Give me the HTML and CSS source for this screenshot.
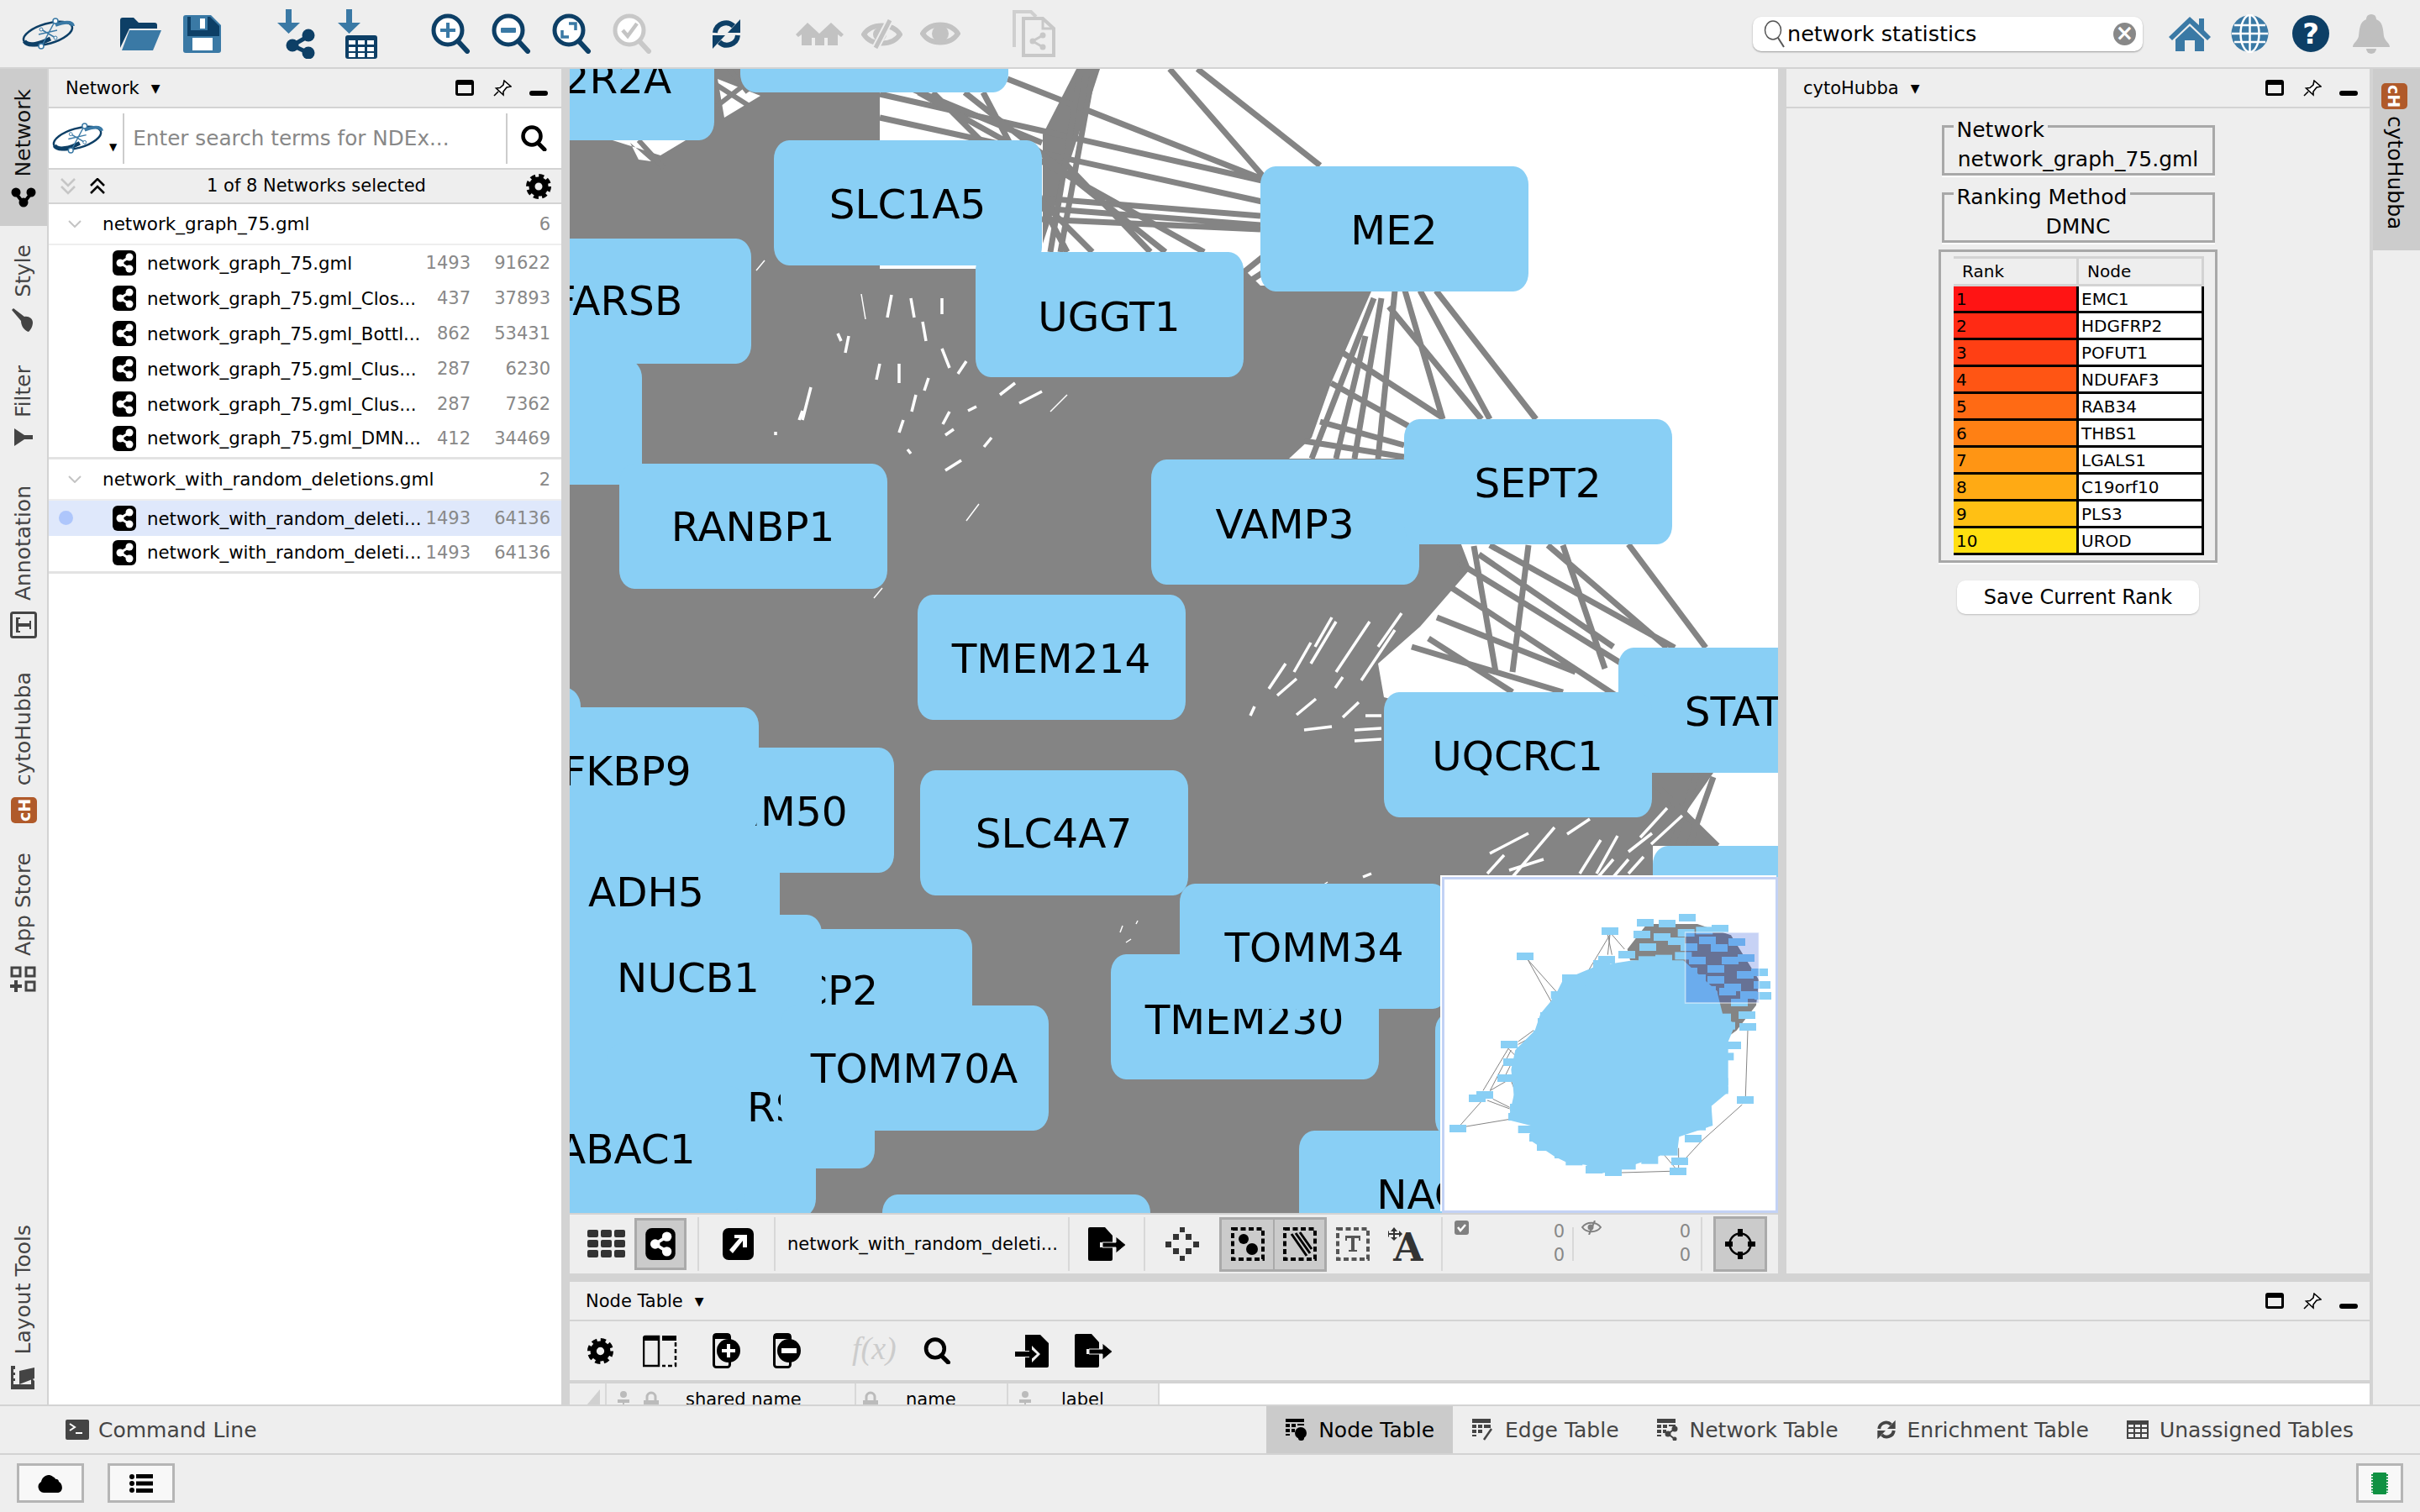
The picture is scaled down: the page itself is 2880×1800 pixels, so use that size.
FILE: index.html
```html
<!DOCTYPE html>
<html lang="en">
<head>
    <meta charset="UTF-8">
    <title>Cytoscape</title>
    <link rel="stylesheet" href="styles.css">
</head>
<body>
<svg class="defs" width="0" height="0">
    <symbol id="i-logo" viewBox="0 0 66 38">
        <ellipse cx="33" cy="19" rx="30" ry="12" transform="rotate(-16 33 19)" fill="none" stroke="#0d3f66" stroke-width="2.5"/>
        <path d="M5 28C10 35 24 31 36 25" fill="none" stroke="#0d3f66" stroke-width="5"/>
        <path d="M42 9C52 5 62 4 63 10" fill="none" stroke="#3a79a5" stroke-width="4"/>
        <path d="M42 3L25 35M25 14L42 24M22 20L44 15" fill="none" stroke="#3a79a5" stroke-width="1.5"/>
        <circle cx="42" cy="4" r="3" fill="#fff" stroke="#3a79a5" stroke-width="1.5"/>
        <circle cx="25" cy="34" r="3" fill="#fff" stroke="#3a79a5" stroke-width="1.5"/>
        <circle cx="25" cy="14" r="2" fill="#fff" stroke="#3a79a5"/>
        <circle cx="42" cy="24" r="2" fill="#fff" stroke="#3a79a5"/>
    </symbol>
    <symbol id="i-share" viewBox="0 0 28 30">
        <rect width="28" height="30" rx="6" fill="#000"/>
        <path d="M20 8L9 15L20 22" fill="none" stroke="#fff" stroke-width="3"/>
        <circle cx="20" cy="8" r="4.5" fill="#fff"/>
        <circle cx="9" cy="15" r="4.5" fill="#fff"/>
        <circle cx="20" cy="22" r="4.5" fill="#fff"/>
    </symbol>
    <symbol id="i-window" viewBox="0 0 22 19">
        <rect x="1.5" y="1.5" width="19" height="16" rx="1.5" fill="none" stroke="#000" stroke-width="3"/>
        <rect x="1" y="1" width="20" height="5" fill="#000"/>
    </symbol>
    <symbol id="i-pin" viewBox="0 0 22 20">
        <path d="M13 1L21 8L16 9L12 14L12 18L3.5 10L8 9.5L12 6Z" fill="#fff" stroke="#000" stroke-width="1.6"/>
        <path d="M6 14L1 19" stroke="#000" stroke-width="1.6"/>
    </symbol>
    <symbol id="i-gear" viewBox="0 0 30 30">
        <circle cx="15" cy="15" r="8" fill="none" stroke="#000" stroke-width="7"/>
        <circle cx="15" cy="15" r="12.5" fill="none" stroke="#000" stroke-width="5" stroke-dasharray="5.8 4"/>
    </symbol>
    <symbol id="i-search" viewBox="0 0 31 31">
        <circle cx="13" cy="13" r="10.5" fill="none" stroke="#000" stroke-width="4.5"/>
        <path d="M20 21L28 29" stroke="#000" stroke-width="5" stroke-linecap="round"/>
    </symbol>
    <symbol id="i-lens" viewBox="0 0 47 48">
        <circle cx="20" cy="20" r="17" fill="#fff" stroke="currentColor" stroke-width="5"/>
        <path d="M32 33L43 45" stroke="currentColor" stroke-width="6" stroke-linecap="round"/>
    </symbol>
    <symbol id="i-export" viewBox="0 0 45 40">
        <path d="M2 0H20L29 10V18H14V24H29V38A2 2 0 0 1 27 40H2A2 2 0 0 1 0 38V2A2 2 0 0 1 2 0Z" fill="#000"/>
        <path d="M17 18H33V11L45 21L33 31V24H17Z" fill="#000" stroke="#eee"/>
    </symbol>
    <symbol id="i-dotted" viewBox="0 0 40 40">
        <rect x="2" y="2" width="36" height="36" fill="none" stroke="#000" stroke-width="4" stroke-dasharray="6 3.5"/>
    </symbol>
    <symbol id="i-person" viewBox="0 0 20 26">
        <circle cx="10" cy="4" r="4" fill="#bbb"/>
        <path d="M3 10H17V14H11V18H18V26H14V21H6V26H2V18H9V14H3Z" fill="#bbb"/>
    </symbol>
    <symbol id="i-lock" viewBox="0 0 18 26">
        <path d="M4 12V7A5 5 0 0 1 14 7V12" fill="none" stroke="#bbb" stroke-width="3"/>
        <rect y="11" width="18" height="15" fill="#bbb"/>
    </symbol>
</svg>

<div class="app">
    <header class="toolbar">
        <svg class="tb-logo" width="66" height="38"><use href="#i-logo"/></svg>
        <div class="tool-group tb-file">
            <svg width="49" height="39" viewBox="0 0 49 39">
                <path d="M0 3A3 3 0 0 1 3 0H16L22 6H41A3 3 0 0 1 44 9V13H11L0 36Z" fill="#0d3f66"/>
                <path d="M11 15H49L39 39H2Z" fill="#3a79a5"/>
            </svg>
            <svg width="45" height="45" viewBox="0 0 45 45">
                <path d="M3 0H33L45 12V42A3 3 0 0 1 42 45H3A3 3 0 0 1 0 42V3A3 3 0 0 1 3 0Z" fill="#3a79a5"/>
                <path d="M5 2H32L43 13V25H5Z" fill="#0d3f66"/>
                <rect x="9" y="2" width="20" height="16" fill="#3a79a5"/>
                <rect x="20" y="4" width="6" height="12" fill="#fff"/>
                <rect x="11" y="27" width="24" height="15" fill="#fff"/>
            </svg>
        </div>
        <div class="tool-group tb-import">
            <svg width="46" height="59" viewBox="0 0 46 59">
                <path d="M10 0H17V16H27L13.5 29L0 16H10Z" fill="#3a79a5"/>
                <path d="M37 32L18 43L37 52" fill="none" stroke="#0d3f66" stroke-width="5"/>
                <circle cx="37" cy="31" r="7.5" fill="#0d3f66"/>
                <circle cx="18" cy="43" r="7.5" fill="#0d3f66"/>
                <circle cx="37" cy="52" r="7.5" fill="#0d3f66"/>
            </svg>
            <svg width="47" height="59" viewBox="0 0 47 59">
                <path d="M10 0H17V16H27L13.5 29L0 16H10Z" fill="#3a79a5"/>
                <rect x="9" y="31" width="38" height="28" rx="3" fill="#0d3f66"/>
                <path d="M13 37h8v5h-8zM24 37h8v5h-8zM35 37h8v5h-8zM13 45h8v5h-8zM24 45h8v5h-8zM35 45h8v5h-8zM13 52h8v5h-8zM24 52h8v5h-8zM35 52h8v5h-8z" fill="#fff"/>
            </svg>
        </div>
        <div class="tool-group tb-zoom">
            <svg class="lens" width="47" height="48" viewBox="0 0 47 48">
                <use href="#i-lens"/>
                <path d="M18 11H22V18H29V22H22V29H18V22H11V18H18Z" fill="#3a79a5"/>
            </svg>
            <svg class="lens" width="47" height="48" viewBox="0 0 47 48">
                <use href="#i-lens"/>
                <rect x="11" y="17" width="18" height="6" rx="1" fill="#3a79a5"/>
            </svg>
            <svg class="lens" width="47" height="48" viewBox="0 0 47 48">
                <use href="#i-lens"/>
                <path d="M20 12H28V20M12 20V28H20" fill="none" stroke="#3a79a5" stroke-width="3.5"/>
            </svg>
            <svg class="lens lens-off" width="47" height="48" viewBox="0 0 47 48">
                <use href="#i-lens"/>
                <path d="M12 20L18 27L29 12" fill="none" stroke="#c4c4c4" stroke-width="4.5"/>
            </svg>
        </div>
        <svg class="tb-refresh" width="37" height="35" viewBox="0 0 37 35">
            <path d="M5 16A13 13 0 0 1 27 8" fill="none" stroke="#0d3f66" stroke-width="6"/>
            <path d="M35 0V16H20Z" fill="#0d3f66"/>
            <path d="M32 19A13 13 0 0 1 10 27" fill="none" stroke="#0d3f66" stroke-width="6"/>
            <path d="M2 35V19H17Z" fill="#0d3f66"/>
        </svg>
        <div class="tool-group tb-view">
            <svg width="57" height="27" viewBox="0 0 57 27">
                <path d="M14 0L28 13L42 0L57 14L54 17L50 14V27H38V18H34V27H23V18H19V27H7V14L3 17L0 14Z" fill="#c2c2c2"/>
            </svg>
            <svg width="49" height="35" viewBox="0 0 49 35">
                <path d="M3 18C12 4 37 4 46 18C37 32 12 32 3 18Z" fill="none" stroke="#c2c2c2" stroke-width="6"/>
                <circle cx="22" cy="18" r="8" fill="#c2c2c2"/>
                <path d="M34 1L17 34" stroke="#eee" stroke-width="9"/>
                <path d="M34 1L17 34" stroke="#c2c2c2" stroke-width="5"/>
            </svg>
            <svg width="48" height="30" viewBox="0 0 48 30">
                <path d="M3 15C12 1 36 1 45 15C36 29 12 29 3 15Z" fill="none" stroke="#c2c2c2" stroke-width="6"/>
                <circle cx="24" cy="15" r="10" fill="#c2c2c2"/>
            </svg>
        </div>
        <svg class="tb-doc" width="51" height="56" viewBox="0 0 51 56">
            <path d="M2 44V2H22L28 8" fill="none" stroke="#cfcfcf" stroke-width="4"/>
            <path d="M13 10H36L49 22V54H13Z" fill="#eee" stroke="#c8c8c8" stroke-width="4"/>
            <path d="M36 10V22H49" fill="none" stroke="#c8c8c8" stroke-width="3"/>
            <path d="M36 30L24 37L36 44" fill="none" stroke="#c8c8c8" stroke-width="3"/>
            <circle cx="36" cy="30" r="3.5" fill="#c8c8c8"/><circle cx="24" cy="37" r="3.5" fill="#c8c8c8"/><circle cx="36" cy="44" r="3.5" fill="#c8c8c8"/>
        </svg>
        <div class="cmd-search">
            <svg width="26" height="34" viewBox="0 0 26 34">
                <ellipse cx="11" cy="13" rx="9.5" ry="11" fill="none" stroke="#555" stroke-width="1.5"/>
                <path d="M17 22L24 33" stroke="#555" stroke-width="2"/>
            </svg>
            <span class="cmd-text">network statistics</span>
            <span class="cmd-clear">×</span>
        </div>
        <div class="tool-group tb-right">
            <svg class="tb-home" width="50" height="41" viewBox="0 0 50 41">
                <path d="M25 0L36 10V2H42V16L50 24L46 28L25 8L4 28L0 24Z" fill="#3a79a5"/>
                <path d="M8 27L25 11L42 27V41H31V28H19V41H8Z" fill="#3a79a5"/>
            </svg>
            <svg width="45" height="46" viewBox="0 0 45 46">
                <circle cx="22.5" cy="23" r="22" fill="#3a79a5"/>
                <path d="M22.5 1V45M1 23H44M4 13H41M4 33H41" stroke="#fff" stroke-width="2.5" fill="none"/>
                <ellipse cx="22.5" cy="23" rx="11" ry="22" fill="none" stroke="#fff" stroke-width="2.5"/>
            </svg>
            <svg class="help" width="44" height="44" viewBox="0 0 44 44">
                <circle cx="22" cy="22" r="22" fill="#0d3f66"/>
                <text x="22" y="34" class="help-mark">?</text>
            </svg>
            <svg width="44" height="47" viewBox="0 0 44 47">
                <path d="M22 0C27 0 28 4 28 6C36 9 36 18 37 26C38 32 44 34 44 39H0C0 34 6 32 7 26C8 18 8 9 16 6C16 4 17 0 22 0Z" fill="#bfbfbf"/>
                <path d="M16 41A6 6 0 0 0 28 41Z" fill="#bfbfbf"/>
            </svg>
        </div>
    </header>

    <div class="main">
        <nav class="side-strip">
            <div class="side-tab active">
                <span class="tab-label">Network</span>
                <svg width="30" height="24" viewBox="0 0 30 24">
                    <path d="M5 6L15 19L25 6" fill="none" stroke="#000" stroke-width="4"/>
                    <circle cx="6" cy="6" r="5.5" fill="#000"/><circle cx="24" cy="6" r="5.5" fill="#000"/><circle cx="15" cy="18" r="5.5" fill="#000"/>
                </svg>
            </div>
            <div class="side-tab">
                <span class="tab-label">Style</span>
                <svg width="30" height="28" viewBox="0 0 30 28">
                    <path d="M1 2L3 0L16 10C21 9 26 12 26 17C26 22 23 26 21 28C17 27 12 22 12 15Z" fill="#444"/>
                </svg>
            </div>
            <div class="side-tab">
                <span class="tab-label">Filter</span>
                <svg width="22" height="22" viewBox="0 0 22 22">
                    <path d="M0 0L12 8H22V13H12L0 21Z" fill="#444"/>
                </svg>
            </div>
            <div class="side-tab tab-anno">
                <span class="tab-label">Annotation</span>
                <svg width="32" height="32" viewBox="0 0 32 32">
                    <rect x="1.5" y="1.5" width="29" height="29" rx="2" fill="none" stroke="#444" stroke-width="3"/>
                    <path d="M7 7H25V12H23V10H18V23H21V25H11V23H14V10H9V12H7Z" fill="#444" transform="rotate(-90 16 16)"/>
                </svg>
            </div>
            <div class="side-tab">
                <span class="tab-label">cytoHubba</span>
                <span class="ch-badge ch-left">cH</span>
            </div>
            <div class="side-tab tab-store">
                <span class="tab-label">App Store</span>
                <svg width="32" height="32" viewBox="0 0 32 32">
                    <g fill="none" stroke="#444" stroke-width="3">
                        <rect x="2" y="2" width="10" height="10"/><rect x="19" y="2" width="10" height="10"/><rect x="19" y="19" width="10" height="10"/>
                    </g>
                    <path d="M5 17H9V22H14V26H9V31H5V26H0V22H5Z" fill="#444"/>
                </svg>
            </div>
            <div class="side-tab bottom">
                <span class="tab-label">Layout Tools</span>
                <svg width="30" height="28" viewBox="0 0 30 28">
                    <path d="M0 0H5V4H3V8H5V11H3V15H5V18H3V22H24V16H26L28 18V28H0Z" fill="#444"/>
                    <path d="M10 6L28 2V15L10 22Z" fill="#444"/>
                </svg>
            </div>
        </nav>

        <section class="left-panel">
            <div class="panel-head">
                <span class="head-title">Network</span><span class="caret">▼</span>
                <svg class="head-win" width="22" height="19"><use href="#i-window"/></svg>
                <svg class="head-pin" width="22" height="20"><use href="#i-pin"/></svg>
                <span class="head-min"></span>
            </div>
            <div class="ndex-row">
                <svg class="ndex-logo" width="64" height="37"><use href="#i-logo"/></svg>
                <span class="small-caret">▼</span>
                <span class="ndex-input">Enter search terms for NDEx...</span>
                <svg class="ndex-go" width="31" height="31"><use href="#i-search"/></svg>
            </div>
            <div class="net-summary">
                <svg class="chev-down" width="20" height="20" viewBox="0 0 20 20">
                    <path d="M2 1L10 9L18 1M2 10L10 18L18 10" fill="none" stroke="#c6c6c6" stroke-width="2.5"/>
                </svg>
                <svg class="chev-up" width="20" height="20" viewBox="0 0 20 20">
                    <path d="M2 9L10 1L18 9M2 18L10 10L18 18" fill="none" stroke="#000" stroke-width="2.5"/>
                </svg>
                <span class="summary-text">1 of 8 Networks selected</span>
                <svg class="summary-gear" width="30" height="30"><use href="#i-gear"/></svg>
            </div>
            <div class="net-list">
                <div class="net-group">
                    <svg width="16" height="9" viewBox="0 0 16 9"><path d="M1 1L8 8L15 1" fill="none" stroke="#c4c4c4" stroke-width="2"/></svg>
                    <span class="group-name">network_graph_75.gml</span>
                    <span class="num">6</span>
                </div>
                <div class="net-row">
                    <svg width="28" height="30"><use href="#i-share"/></svg>
                    <span class="net-name">network_graph_75.gml</span><span class="num node-count">1493</span><span class="num edge-count">91622</span>
                </div>
                <div class="net-row">
                    <svg width="28" height="30"><use href="#i-share"/></svg>
                    <span class="net-name">network_graph_75.gml_Clos...</span><span class="num node-count">437</span><span class="num edge-count">37893</span>
                </div>
                <div class="net-row">
                    <svg width="28" height="30"><use href="#i-share"/></svg>
                    <span class="net-name">network_graph_75.gml_Bottl...</span><span class="num node-count">862</span><span class="num edge-count">53431</span>
                </div>
                <div class="net-row">
                    <svg width="28" height="30"><use href="#i-share"/></svg>
                    <span class="net-name">network_graph_75.gml_Clus...</span><span class="num node-count">287</span><span class="num edge-count">6230</span>
                </div>
                <div class="net-row">
                    <svg width="28" height="30"><use href="#i-share"/></svg>
                    <span class="net-name">network_graph_75.gml_Clus...</span><span class="num node-count">287</span><span class="num edge-count">7362</span>
                </div>
                <div class="net-row last">
                    <svg width="28" height="30"><use href="#i-share"/></svg>
                    <span class="net-name">network_graph_75.gml_DMN...</span><span class="num node-count">412</span><span class="num edge-count">34469</span>
                </div>
                <div class="net-group">
                    <svg width="16" height="9" viewBox="0 0 16 9"><path d="M1 1L8 8L15 1" fill="none" stroke="#c4c4c4" stroke-width="2"/></svg>
                    <span class="group-name">network_with_random_deletions.gml</span>
                    <span class="num">2</span>
                </div>
                <div class="net-row selected">
                    <span class="sel-dot"></span>
                    <svg width="28" height="30"><use href="#i-share"/></svg>
                    <span class="net-name">network_with_random_deleti...</span><span class="num node-count">1493</span><span class="num edge-count">64136</span>
                </div>
                <div class="net-row last">
                    <svg width="28" height="30"><use href="#i-share"/></svg>
                    <span class="net-name">network_with_random_deleti...</span><span class="num node-count">1493</span><span class="num edge-count">64136</span>
                </div>
            </div>
        </section>

        <div class="center">
            <div class="center-top">
                <div class="canvas-col">
                    <div class="canvas-wrap">
                        <svg class="graph" width="1438" height="1362" viewBox="678 82 1438 1362">
                            <!-- edges -->
                            <path class="mass" d="M678 82H1047V320H1480L1500 340H1635L1584 456L1561 521L1534 546H1700L1750 677L1690 746L1640 790L1647 830L1966 920H2039L2007 966L2045 1007H1967V1100H1717V1444H678Z"/>
                            <path class="mass" d="M1281 82H1309L1268 208L1241 290L1241 160Z"/>
                            <path class="mass" d="M851 82H1047V170H851Z"/>
                            <g class="edge-lines">
                                <path d="M1392 82L1506 213M1425 82L1571 197M1047 112L1502 215M1047 140L1502 240M1199 94L1502 213M1240 236L1500 257M1240 261L1500 273M1240 248L1500 268"/>
                                <path d="M1093 110L1433 300M1148 110L1387 300M1268 195L1369 300M1110 110L1300 300M1170 110L1270 300M1285 90L1250 300M1300 90L1262 300M1047 90L1240 170"/>
                                <path d="M1709 346L1828 499M1690 346L1773 499M1672 346L1717 499M1653 365L1763 499M1635 355L1561 546M1644 355L1612 546M1598 420L1718 498M1584 456L1676 507M1571 502L1671 530M1552 525L1671 544M1660 346L1640 546M1625 400L1590 546"/>
                                <path d="M1479 325L1510 300M1479 340L1510 320"/>
                                <path d="M1773 649L1993 771M1819 649L1800 800M1842 649L1984 771M1860 649L1910 796M1938 648L2030 771M1754 650L1780 800M1736 670L1930 790M1710 735L1875 800M1760 660L1920 770M1728 700L1926 830M1700 760L1800 824M1680 770L1860 824"/>
                                <path d="M1966 930L2044 1007M2020 920L1990 1007M2039 925L2010 1007"/>
                            </g>
                            <!-- gaps left in the bundle of edges -->
                            <g class="gaps">
                                <path d="M965 461L955 500M997 397L1001 406M1061 351L1056 378M1084 355L1088 378M1121 355L1121 374M1098 383L1102 406M1047 433L1043 452M1070 433L1070 456M1121 415L1130 438M1208 456L1190 470M1240 466L1213 480M1180 521L1171 532M1144 548L1125 560M1080 535L1084 540M1135 511L1125 518M1162 484L1152 489M923 514L923 518M955 489L951 500M1010 400L1006 420M1090 470L1085 490M1105 450L1100 465M1150 430L1140 445M1130 490L1122 505M1075 500L1070 515"/>
                                <path class="thin" d="M1320 340L1314 352M1025 350L1030 380M870 400L858 430M910 310L900 322M1270 470L1250 490M1165 600L1150 620M1050 700L1040 712M830 640L826 650M720 430L716 440"/>
                                <path d="M1543 808L1520 828M1598 806L1589 819M1493 841L1488 852M1566 832L1543 851M1617 836L1598 854M1644 867L1612 869M1644 880L1612 882M1644 852L1625 852M1585 865L1552 869"/>
                                <path d="M1560 790L1590 740M1590 800L1630 740M1620 810L1660 750M1640 770L1668 730M1565 770L1585 735M1540 800L1560 765M1510 820L1530 790"/>
                                <path d="M1819 992L1773 1016M1892 975L1865 993M1837 1023L1796 1036M1920 1023L1902 1044M1938 1023L1920 1044M1966 992L1938 1014M1984 962L1952 997M2002 971L1965 1005M1956 1020L1938 1040M1632 1040L1622 1044"/>
                                <path d="M1800 1044L1850 985M1770 1040L1790 1018M1880 1040L1905 1000M1900 1040L1925 995"/>
                                <path class="thin" d="M1426 1078L1422 1085M1354 1096L1352 1100M1336 1102L1333 1110M1346 1118L1340 1122M1580 1050L1565 1060"/>
                                <path class="wide" d="M854 94L905 114L862 140ZM729 167L786 185L816 167ZM750 170L775 192L760 190Z"/>
                            </g>
                            <path class="edge-cut" d="M851 128L905 86M868 82L890 110M851 100L890 125M760 167L790 200"/>
                            <!-- nodes, back to front -->
                            <rect class="node" x="881" y="-39"/>
                            <rect class="node" x="445" y="428"/>
                            <rect class="node" x="531" y="18"/><text class="label" x="691" y="94">PPP2R2A</text>
                            <rect class="node" x="575" y="284"/><text class="label" x="735" y="358">FARSB</text>
                            <rect class="node" x="737" y="552"/><text class="label" x="896" y="627">RANBP1</text>
                            <rect class="node" x="921" y="167"/><text class="label" x="1080" y="243">SLC1A5</text>
                            <rect class="node" x="1161" y="300"/><text class="label" x="1320" y="377">UGGT1</text>
                            <rect class="node" x="1500" y="198"/><text class="label" x="1659" y="274">ME2</text>
                            <rect class="node" x="1370" y="547"/><text class="label" x="1529" y="624">VAMP3</text>
                            <rect class="node" x="1671" y="499"/><text class="label" x="1830" y="575">SEPT2</text>
                            <rect class="node" x="1092" y="708"/><text class="label" x="1251" y="784">TMEM214</text>
                            <rect class="node" x="1926" y="771"/><text class="label" x="2078" y="847">STAT1</text>
                            <rect class="node" x="1647" y="824"/><text class="label" x="1806" y="900">UQCRC1</text>
                            <rect class="node" x="1967" y="1007"/>
                            <rect class="node" x="745" y="890"/><text class="label" x="914" y="966">TIMM50</text>
                            <rect class="node" x="372" y="819"/>
                            <rect class="node" x="584" y="842"/><text class="label" x="746" y="918">FKBP9</text>
                            <rect class="node" x="609" y="987"/><text class="label" x="769" y="1062">ADH5</text>
                            <rect class="node" x="600" y="1150"/>
                            <rect class="node" x="838" y="1106"/><text class="label" x="998" y="1179">CP2</text>
                            <rect class="node" x="659" y="1089"/><text class="label" x="819" y="1164">NUCB1</text>
                            <rect class="node" x="652" y="1300"/>
                            <rect class="node" x="722" y="1242"/><text class="label start" x="889" y="1318">RSL</text>
                            <rect class="node" x="568" y="1293"/><text class="label" x="727" y="1368">GABAC1</text>
                            <rect class="node" x="929" y="1197"/><text class="label" x="1088" y="1272">TOMM70A</text>
                            <rect class="node" x="1095" y="917"/><text class="label" x="1254" y="992">SLC4A7</text>
                            <rect class="node" x="1050" y="1422"/>
                            <rect class="node" x="1322" y="1136"/><text class="label" x="1481" y="1214">TMEM230</text>
                            <rect class="node" x="1404" y="1052"/><text class="label" x="1564" y="1128">TOMM34</text>
                            <rect class="node" x="1708" y="1205"/>
                            <rect class="node" x="1546" y="1346"/><text class="label" x="1706" y="1422">NACA</text>
                        </svg>
                        <div class="minimap">
                            <svg width="394" height="394" viewBox="177 81 1182 1182">
                                <path class="mini-mass" d="M900 240H1080L1200 280L1300 440L1290 530L1220 620L1165 660L1150 480L1030 380L840 370L830 330Z"/>
                                <path class="mini-mass" d="M610 450L650 450V500H610Z"/>
                                <g class="mini-edges">
                                    <path d="M475 368L575 480M475 368L560 520M768 278L680 425M768 278L760 350M775 278L820 330M760 278L775 350M1260 620L1252 855M1240 885L1095 1015M1040 1075L1095 1015M255 963L405 938M235 957L330 850M405 685L315 835M415 690L340 835M340 835L400 800M415 800L445 875M330 870L410 900M350 865L410 895M810 1128L981 1123M440 660L495 620M440 670L495 640M945 1045L1000 1110M1013 1040L1013 1110M425 720L385 800M400 680L440 720"/>
                                </g>
                                <path class="mini-blob" d="M600 440L720 390L850 370L1030 370L1150 480L1170 560L1215 600L1190 660L1190 840L1130 890L1135 960L1015 1000L1010 1040L940 1070L810 1115L740 1130L680 1100L610 1090L570 1070L480 1010L485 960L405 940L425 850L415 760L430 690L500 620L520 560L570 500Z"/>
                                <g class="mini-nodes">
                                    <rect x="435" y="342"/><rect x="738" y="252"/><rect x="864" y="222"/><rect x="942" y="225"/><rect x="1014" y="204"/><rect x="1131" y="243"/><rect x="1075" y="250"/><rect x="852" y="264"/><rect x="924" y="273"/><rect x="975" y="288"/><rect x="1010" y="258"/><rect x="873" y="309"/><rect x="798" y="336"/><rect x="726" y="354"/><rect x="708" y="369"/><rect x="597" y="420"/><rect x="557" y="480"/><rect x="555" y="525"/><rect x="519" y="555"/><rect x="510" y="576"/><rect x="378" y="657"/><rect x="387" y="720"/><rect x="366" y="777"/><rect x="291" y="837"/><rect x="264" y="849"/><rect x="195" y="957"/><rect x="411" y="882"/><rect x="405" y="915"/><rect x="507" y="1023"/><rect x="681" y="1104"/><rect x="750" y="1113"/><rect x="981" y="1110"/><rect x="987" y="1074"/><rect x="1035" y="993"/><rect x="1221" y="855"/><rect x="1227" y="552"/><rect x="1230" y="594"/><rect x="1176" y="660"/><rect x="1281" y="444"/><rect x="1284" y="483"/><rect x="1272" y="399"/>
                                    <rect x="1020" y="309"/><rect x="1086" y="285"/><rect x="1128" y="312"/><rect x="1191" y="291"/><rect x="1050" y="357"/><rect x="1167" y="357"/><rect x="1224" y="348"/><rect x="1116" y="387"/><rect x="1116" y="426"/><rect x="1221" y="408"/><rect x="1050" y="420"/><rect x="1020" y="396"/><rect x="1176" y="453"/><rect x="1158" y="468"/><rect x="1086" y="462"/><rect x="1086" y="480"/><rect x="1233" y="480"/><rect x="1200" y="507"/><rect x="1040" y="450"/>
                                    <rect x="560" y="495"/><rect x="620" y="460"/><rect x="680" y="420"/><rect x="740" y="400"/><rect x="800" y="380"/><rect x="870" y="355"/><rect x="930" y="350"/><rect x="1000" y="340"/><rect x="1140" y="560"/><rect x="1155" y="590"/><rect x="1130" y="620"/><rect x="1150" y="700"/><rect x="1125" y="750"/><rect x="1130" y="790"/><rect x="1130" y="820"/><rect x="1070" y="890"/><rect x="1070" y="920"/><rect x="1050" y="950"/><rect x="950" y="1010"/><rect x="950" y="1040"/><rect x="880" y="1070"/><rect x="800" y="1090"/><rect x="610" y="1075"/><rect x="570" y="1050"/><rect x="480" y="990"/><rect x="440" y="960"/><rect x="450" y="900"/><rect x="425" y="830"/><rect x="420" y="760"/><rect x="435" y="680"/><rect x="495" y="620"/>
                                </g>
                                <rect class="mini-view" x="1037" y="270" width="263" height="252"/>
                            </svg>
                        </div>
                    </div>
                    <div class="canvas-bar">
                        <svg width="46" height="34" viewBox="0 0 46 34">
                            <g fill="#333">
                                <rect width="13" height="9" rx="2"/><rect x="16" width="13" height="9" rx="2"/><rect x="32" width="13" height="9" rx="2"/>
                                <rect y="12" width="13" height="9" rx="2"/><rect x="16" y="12" width="13" height="9" rx="2"/><rect x="32" y="12" width="13" height="9" rx="2"/>
                                <rect y="24" width="13" height="9" rx="2"/><rect x="16" y="24" width="13" height="9" rx="2"/><rect x="32" y="24" width="13" height="9" rx="2"/>
                            </g>
                        </svg>
                        <span class="toggle cb-view"><svg width="38" height="38"><use href="#i-share"/></svg></span>
                        <span class="bar-sep cb-s1"></span>
                        <svg class="cb-arrow" width="37" height="38" viewBox="0 0 37 38">
                            <rect width="37" height="38" rx="7"/>
                            <path d="M14 8H29V23H24V15L12 30L8 26L20 12H14Z" fill="#fff"/>
                        </svg>
                        <span class="bar-sep cb-s2"></span>
                        <span class="cb-title">network_with_random_deleti...</span>
                        <span class="bar-sep cb-s3"></span>
                        <svg class="cb-export" width="45" height="40"><use href="#i-export"/></svg>
                        <span class="bar-sep cb-s4"></span>
                        <svg class="cb-diamond" width="40" height="40" viewBox="0 0 40 40">
                            <path d="M17 0h6v6h-6zM9 8h7v7H9zM24 8h7v7h-7zM0 17h7v7H0zM33 17h7v7h-7zM9 25h7v7H9zM24 25h7v7h-7zM17 34h6v6h-6z" fill="#333"/>
                        </svg>
                        <span class="toggle-pair">
                            <span class="pair-cell">
                                <svg width="40" height="40" viewBox="0 0 40 40">
                                    <use href="#i-dotted"/>
                                    <circle cx="15" cy="14" r="6" fill="#000"/><circle cx="25" cy="26" r="7" fill="#000"/>
                                </svg>
                            </span>
                            <span class="pair-cell">
                                <svg width="40" height="40" viewBox="0 0 40 40">
                                    <use href="#i-dotted"/>
                                    <path d="M10 8L28 34M15 7L32 31M20 6L34 26" stroke="#000" stroke-width="3"/>
                                </svg>
                            </span>
                        </span>
                        <svg class="cb-textbox" width="40" height="40" viewBox="0 0 40 40">
                            <rect x="2" y="2" width="36" height="36" fill="none" stroke="#555" stroke-width="4" stroke-dasharray="6 3.5"/>
                            <path d="M11 10H29V16H27V13H22V27H25V29H15V27H18V13H13V16H11Z" fill="#555"/>
                        </svg>
                        <svg class="cb-move" width="42" height="42" viewBox="0 0 42 42">
                            <path d="M7 1L11 6H8V8H13V5L17 9L13 13V10H8V13H11L7 17L3 13H6V10H1V13L-3 9L1 5V8H6V6H3Z" fill="#333"/>
                            <text class="move-a" x="24" y="41">A</text>
                        </svg>
                        <span class="bar-sep cb-s5"></span>
                        <div class="stats stats-sel">
                            <svg width="17" height="17" viewBox="0 0 17 17">
                                <rect width="17" height="17" rx="3" fill="#808080"/>
                                <path d="M4 8L7 12L13 5" fill="none" stroke="#fff" stroke-width="2.5"/>
                            </svg>
                            <span class="stat-nums"><span>0</span><span>0</span></span>
                        </div>
                        <span class="bar-sep stat-sep"></span>
                        <div class="stats stats-hid">
                            <svg width="24" height="17" viewBox="0 0 24 17">
                                <path d="M1 8C6 1 18 1 23 8C18 15 6 15 1 8Z" fill="none" stroke="#808080" stroke-width="2"/>
                                <circle cx="11" cy="8" r="3.5" fill="#808080"/>
                                <path d="M16 0L9 17" stroke="#808080" stroke-width="2"/>
                            </svg>
                            <span class="stat-nums"><span>0</span><span>0</span></span>
                        </div>
                        <span class="bar-sep cb-s6"></span>
                        <span class="toggle cb-target">
                            <svg width="36" height="36" viewBox="0 0 36 36">
                                <circle cx="18" cy="18" r="12.5" fill="none" stroke="#000" stroke-width="2.5"/>
                                <path d="M18 0V9M18 27V36M0 18H9M27 18H36" stroke="#000" stroke-width="6"/>
                            </svg>
                        </span>
                    </div>
                </div>

                <section class="right-panel">
                    <div class="panel-head">
                        <span class="head-title">cytoHubba</span><span class="caret">▼</span>
                        <svg class="head-win" width="22" height="19"><use href="#i-window"/></svg>
                        <svg class="head-pin" width="22" height="20"><use href="#i-pin"/></svg>
                        <span class="head-min"></span>
                    </div>
                    <div class="hubba-body">
                        <fieldset class="titled-box">
                            <legend>Network</legend>
                            <div class="box-value">network_graph_75.gml</div>
                        </fieldset>
                        <fieldset class="titled-box">
                            <legend>Ranking Method</legend>
                            <div class="box-value">DMNC</div>
                        </fieldset>
                        <div class="rank-box">
                            <table class="rank-table">
                                <thead>
                                    <tr><th>Rank</th><th>Node</th></tr>
                                </thead>
                                <tbody>
                                    <tr><td class="rank r1">1</td><td>EMC1</td></tr>
                                    <tr><td class="rank r2">2</td><td>HDGFRP2</td></tr>
                                    <tr><td class="rank r3">3</td><td>POFUT1</td></tr>
                                    <tr><td class="rank r4">4</td><td>NDUFAF3</td></tr>
                                    <tr><td class="rank r5">5</td><td>RAB34</td></tr>
                                    <tr><td class="rank r6">6</td><td>THBS1</td></tr>
                                    <tr><td class="rank r7">7</td><td>LGALS1</td></tr>
                                    <tr><td class="rank r8">8</td><td>C19orf10</td></tr>
                                    <tr><td class="rank r9">9</td><td>PLS3</td></tr>
                                    <tr><td class="rank r10">10</td><td>UROD</td></tr>
                                </tbody>
                            </table>
                        </div>
                        <button class="save-rank">Save Current Rank</button>
                    </div>
                </section>
            </div>

            <section class="table-panel">
                <div class="panel-head">
                    <span class="head-title">Node Table</span><span class="caret">▼</span>
                    <svg class="head-win" width="22" height="19"><use href="#i-window"/></svg>
                    <svg class="head-pin" width="22" height="20"><use href="#i-pin"/></svg>
                    <span class="head-min"></span>
                </div>
                <div class="table-tools">
                    <svg class="tt-gear" width="31" height="31"><use href="#i-gear"/></svg>
                    <svg class="tt-split" width="41" height="39" viewBox="0 0 41 39">
                        <path d="M19 2H3A2 2 0 0 0 1 4V37H19Z" fill="none" stroke="#000" stroke-width="2.5"/>
                        <rect x="1" y="1" width="18" height="6"/>
                        <path d="M23 1H40V7H23Z"/>
                        <path d="M39 9V37H23" fill="none" stroke="#000" stroke-width="2.5" stroke-dasharray="5 3"/>
                    </svg>
                    <svg class="tt-col" width="33" height="42" viewBox="0 0 33 42">
                        <rect x="1.5" y="1.5" width="19" height="39" rx="3" fill="none" stroke="#000" stroke-width="3"/>
                        <rect x="1" y="1" width="20" height="6"/>
                        <circle cx="19" cy="21" r="14" fill="#000"/>
                        <path d="M17 13H21V19H27V23H21V29H17V23H11V19H17Z" fill="#fff"/>
                    </svg>
                    <svg class="tt-col2" width="33" height="42" viewBox="0 0 33 42">
                        <rect x="1.5" y="1.5" width="19" height="39" rx="3" fill="none" stroke="#000" stroke-width="3"/>
                        <rect x="1" y="1" width="20" height="6"/>
                        <circle cx="19" cy="21" r="14" fill="#000"/>
                        <rect x="10" y="18" width="18" height="6" fill="#fff"/>
                    </svg>
                    <svg class="tt-fx" width="60" height="36" viewBox="0 0 60 36">
                        <text class="fx" x="1" y="28">f(x)</text>
                    </svg>
                    <svg class="tt-search" width="33" height="32"><use href="#i-search"/></svg>
                    <svg class="tt-import" width="40" height="39" viewBox="0 0 40 39">
                        <path d="M12 0H30L40 10V37A2 2 0 0 1 38 39H12V27H20V33L30 23L20 13V19H12Z"/>
                        <path d="M0 20H17V15L26 23L17 31V26H0Z"/>
                    </svg>
                    <svg class="tt-export" width="45" height="40"><use href="#i-export"/></svg>
                </div>
                <div class="table-head">
                    <svg class="th-corner" width="16" height="19" viewBox="0 0 16 19"><path d="M16 0V19H0Z" fill="#d0d0d0"/></svg>
                    <div class="th-cell th-shared">
                        <svg width="20" height="26"><use href="#i-person"/></svg>
                        <svg width="18" height="26"><use href="#i-lock"/></svg>
                        <span class="th-text">shared name</span>
                    </div>
                    <div class="th-cell th-name">
                        <svg width="18" height="26"><use href="#i-lock"/></svg>
                        <span class="th-text">name</span>
                    </div>
                    <div class="th-cell th-label">
                        <svg width="20" height="26"><use href="#i-person"/></svg>
                        <span class="th-text">label</span>
                    </div>
                </div>
            </section>
        </div>

        <nav class="side-strip-right">
            <div class="right-tab">
                <span class="ch-badge ch-right">cH</span>
                <span class="right-tab-label">cytoHubba</span>
            </div>
        </nav>
    </div>

    <div class="bottom-tabs">
        <div class="cmd-tab">
            <svg width="28" height="24" viewBox="0 0 28 24">
                <rect width="28" height="24" rx="2" fill="#444"/>
                <path d="M5 5L11 9L5 13" fill="none" stroke="#fff" stroke-width="2"/>
                <path d="M12 16H20" stroke="#fff" stroke-width="2"/>
            </svg>
            <span>Command Line</span>
        </div>
        <div class="table-tabs">
            <div class="btab active">
                <svg width="26" height="26" viewBox="0 0 26 26">
                    <path d="M0 0H22V4H0ZM0 6H5V10H0ZM7 6H12V10H7ZM14 6H22V8H14ZM0 12H5V16H0ZM7 12H11V16H7ZM0 18H5V20H0Z"/>
                    <circle cx="18" cy="17" r="7"/>
                    <rect x="15" y="18" width="7" height="8" rx="3"/>
                </svg>
                <span>Node Table</span>
            </div>
            <div class="btab">
                <svg width="26" height="26" viewBox="0 0 26 26">
                    <path d="M0 0H22V5H0ZM0 7H5V11H0ZM7 7H12V11H7ZM14 7H22V11H14ZM0 13H5V17H0ZM7 13H12V17H7ZM0 19H5V21H0Z" fill="#444"/>
                    <path d="M14 25L23 12" stroke="#444" stroke-width="2.5"/>
                </svg>
                <span>Edge Table</span>
            </div>
            <div class="btab">
                <svg width="26" height="26" viewBox="0 0 26 26">
                    <path d="M0 0H22V5H0ZM0 7H5V11H0ZM7 7H12V11H7ZM14 7H22V9H14ZM0 13H5V17H0ZM7 13H11V17H7ZM0 19H5V21H0Z" fill="#444"/>
                    <path d="M21 12L13 18L21 24" fill="none" stroke="#444" stroke-width="2"/>
                    <circle cx="21" cy="12" r="3.5" fill="#444"/><circle cx="13" cy="18" r="3.5" fill="#444"/><circle cx="21" cy="24" r="2.5" fill="#444"/>
                </svg>
                <span>Network Table</span>
            </div>
            <div class="btab">
                <svg width="24" height="24" viewBox="0 0 37 35">
                    <path d="M5 16A13 13 0 0 1 27 8" fill="none" stroke="#444" stroke-width="6"/>
                    <path d="M35 0V16H20Z" fill="#444"/>
                    <path d="M32 19A13 13 0 0 1 10 27" fill="none" stroke="#444" stroke-width="6"/>
                    <path d="M2 35V19H17Z" fill="#444"/>
                </svg>
                <span>Enrichment Table</span>
            </div>
            <div class="btab">
                <svg width="26" height="22" viewBox="0 0 26 22">
                    <rect x="1" y="1" width="24" height="20" fill="none" stroke="#444" stroke-width="2"/>
                    <rect x="1" y="1" width="24" height="4" fill="#444"/>
                    <path d="M9 1V21M17 1V21M1 9H25M1 15H25" stroke="#444" stroke-width="2"/>
                </svg>
                <span>Unassigned Tables</span>
            </div>
        </div>
    </div>

    <footer class="status-bar">
        <button class="status-btn">
            <svg width="30" height="22" viewBox="0 0 30 22">
                <path d="M7 22A7 7 0 0 1 4 9C5 3 12 -2 18 3C20 4 21 5 21 6C24 5 25 8 25 9C30 11 31 22 23 22Z"/>
            </svg>
        </button>
        <button class="status-btn">
            <svg width="28" height="22" viewBox="0 0 28 22">
                <circle cx="3" cy="3" r="3"/><circle cx="3" cy="11" r="3"/><circle cx="3" cy="19" r="3"/>
                <path d="M8 0H28V5H8ZM8 8.5H28V13.5H8ZM8 17H28V22H8Z"/>
            </svg>
        </button>
        <button class="status-btn mem-btn">
            <svg width="20" height="26" viewBox="0 0 20 26">
                <rect x="2" width="16" height="26" rx="1" fill="#0f9142"/>
                <path d="M1 2V24M19 2V24" stroke="#0f9142" stroke-width="2" stroke-dasharray="2 1.5"/>
            </svg>
        </button>
    </footer>
</div>
</body>
</html>
```

FILE: styles.css
```css
* {
    box-sizing: border-box;
}

body {
    margin: 0;
    overflow: hidden;
    font-family: "DejaVu Sans", sans-serif;
    background: #eeeeee;
    color: #000;
}

svg {
    display: block;
    flex: none;
}

.defs {
    position: absolute;
}

.app {
    width: 2880px;
    height: 1800px;
    display: flex;
    flex-direction: column;
}

/* top toolbar */
.toolbar {
    height: 82px;
    flex: none;
    display: flex;
    align-items: center;
    padding-left: 24px;
    border-bottom: 2px solid #d3d3d3;
}

.tool-group {
    display: flex;
    align-items: center;
}

.tb-file { margin-left: 53px; gap: 26px; }
.tb-import { margin-left: 67px; gap: 26px; }
.tb-zoom { margin-left: 64px; gap: 25px; color: #0d3f66; }
.tb-zoom .lens-off { color: #c8c8c8; }
.tb-refresh { margin-left: 70px; }
.tb-view { margin-left: 64px; gap: 21px; }
.tb-doc { margin-left: 62px; }

.tb-right {
    gap: 28px;
    margin-left: 31px;
    margin-right: 36px;
}

.tb-home { margin-right: -4px; }

.cmd-search {
    margin-left: auto;
    width: 464px;
    height: 41px;
    display: flex;
    align-items: center;
    padding: 0 8px 0 13px;
    background: #fff;
    border-radius: 10px;
    box-shadow: 0 1px 2px #999;
}

.cmd-text {
    margin-left: 2px;
    font-size: 25.5px;
    flex: 1;
}

.cmd-clear {
    width: 27px;
    height: 27px;
    border-radius: 50%;
    background: #888;
    color: #fff;
    font-size: 26px;
    font-weight: bold;
    line-height: 25px;
    text-align: center;
}

.help-mark {
    font-family: "DejaVu Sans", sans-serif;
    font-size: 34px;
    font-weight: bold;
    fill: #fff;
    text-anchor: middle;
}

/* main area */
.main {
    height: 1590px;
    flex: none;
    display: flex;
}

.side-strip {
    width: 58px;
    flex: none;
    display: flex;
    flex-direction: column;
    border-right: 2px solid #d3d3d3;
    color: #444;
}

.side-tab {
    display: flex;
    flex-direction: column;
    align-items: center;
    gap: 13px;
    padding: 0 0 40px;
}

.side-tab.active {
    background: #cccccc;
    color: #111;
    padding: 24px 0 22px;
    margin-bottom: 22px;
}

.side-tab.tab-anno { margin-top: 6px; }
.side-tab.tab-store { margin-top: -5px; }

.side-tab.bottom {
    margin-top: auto;
    padding-bottom: 18px;
}

.tab-label {
    writing-mode: vertical-rl;
    transform: rotate(180deg);
    font-size: 25px;
    line-height: 30px;
    white-space: nowrap;
}

.ch-badge {
    width: 31px;
    height: 31px;
    border-radius: 5px;
    background: #b05a2a;
    color: #fff;
    font-size: 19px;
    font-weight: bold;
    display: flex;
    align-items: center;
    justify-content: center;
}

.ch-left {
    transform: rotate(-90deg);
}

.ch-right {
    transform: rotate(90deg);
}

/* left panel */
.left-panel {
    width: 610px;
    flex: none;
    display: flex;
    flex-direction: column;
}

.panel-head {
    height: 47px;
    flex: none;
    display: flex;
    align-items: center;
    border-bottom: 2px solid #d3d3d3;
    font-size: 21px;
    padding-right: 14px;
}

.left-panel .panel-head { padding-left: 20px; padding-right: 16px; }
.right-panel .panel-head { padding-left: 20px; }
.table-panel .panel-head { padding-left: 19px; }

.caret {
    margin-left: 14px;
    font-size: 14px;
}

.head-win { margin-left: auto; }
.head-pin { margin-left: 23px; }

.head-min {
    width: 22px;
    height: 6px;
    margin: 12px 0 0 21px;
    background: #000;
    border-radius: 3px;
}

.ndex-row {
    height: 73px;
    flex: none;
    display: flex;
    align-items: center;
    background: #fff;
    border-bottom: 2px solid #d3d3d3;
    padding-left: 2px;
}

.small-caret {
    margin-left: 6px;
    font-size: 12px;
    align-self: flex-end;
    padding-bottom: 18px;
}

.ndex-input {
    margin-left: 7px;
    width: 458px;
    height: 60px;
    line-height: 60px;
    padding-left: 10px;
    border-left: 2px solid #ccc;
    border-right: 2px solid #ccc;
    color: #888;
    font-size: 24.7px;
    white-space: nowrap;
}

.ndex-go { margin-left: 16px; }

.net-summary {
    height: 41px;
    flex: none;
    display: flex;
    align-items: center;
    border-bottom: 2px solid #d3d3d3;
    font-size: 21px;
}

.chev-down { margin-left: 13px; }
.chev-up { margin-left: 15px; }

.summary-text {
    margin-left: 120px;
    margin-top: -2px;
    white-space: nowrap;
}

.summary-gear { margin-left: auto; margin-right: 12px; }

.net-list {
    flex: 1;
    background: #fff;
}

.net-group {
    height: 49px;
    display: flex;
    align-items: center;
    padding: 0 13px 0 23px;
    border-bottom: 2px solid #eeeeee;
    font-size: 21.5px;
}

.group-name {
    margin-left: 25px;
    flex: 1;
}

.net-row {
    height: 42px;
    display: flex;
    align-items: center;
    padding: 0 13px 0 76px;
    font-size: 21.3px;
    position: relative;
}

.net-row.last {
    height: 45px;
    padding-bottom: 3px;
    border-bottom: 3px solid #e3e3e3;
}

.net-row.selected {
    background: #dfe8fb;
}

.sel-dot {
    position: absolute;
    left: 12px;
    top: 12px;
    width: 17px;
    height: 17px;
    border-radius: 50%;
    background: #aec6fb;
}

.net-name {
    margin-left: 13px;
    flex: 1;
    min-width: 0;
    white-space: nowrap;
}

.num {
    color: #888;
    font-size: 21px;
    text-align: right;
}

.node-count { width: 60px; flex: none; }
.edge-count { width: 95px; flex: none; }

/* centre */
.center {
    flex: 1;
    display: flex;
    flex-direction: column;
    border-left: 10px solid #d3d3d3;
    min-width: 0;
}

.center-top {
    height: 1434px;
    flex: none;
    display: flex;
}

.canvas-col {
    width: 1438px;
    flex: none;
}

.canvas-wrap {
    position: relative;
    height: 1362px;
    background: #fff;
    overflow: hidden;
}

.graph {
    font-family: "DejaVu Sans", sans-serif;
}

.mass { fill: #848484; }

.edge-lines {
    stroke: #848484;
    stroke-width: 7;
    fill: none;
}

.edge-cut {
    stroke: #848484;
    stroke-width: 6;
    fill: none;
}

.gaps {
    stroke: #fff;
    stroke-width: 3.5;
    fill: none;
}

.gaps .thin { stroke-width: 1.5; }
.gaps .wide { fill: #fff; stroke: none; }

.node {
    width: 319px;
    height: 149px;
    rx: 18px;
    ry: 22px;
    fill: #89cff5;
}

.label {
    font-size: 48.5px;
    text-anchor: middle;
    dominant-baseline: central;
    fill: #000;
}

.label.start { text-anchor: start; }

.minimap {
    position: absolute;
    right: 0;
    bottom: 0;
    width: 400px;
    height: 400px;
    background: #fff;
    border: 3px solid #c3d2f5;
    box-shadow: -2px -2px 0 #fff;
}

.mini-mass { fill: #848484; }

.mini-edges {
    stroke: #848484;
    stroke-width: 3;
    fill: none;
}

.mini-blob { fill: #89cff5; }

.mini-nodes rect {
    width: 60px;
    height: 27px;
    fill: #89cff5;
}

.mini-view {
    fill: rgba(0, 50, 209, 0.22);
    stroke: rgba(255, 255, 255, 0.5);
    stroke-width: 5;
}

/* bar under the canvas */
.canvas-bar {
    height: 72px;
    display: flex;
    align-items: center;
    padding-left: 21px;
    border-top: 2px solid #d3d3d3;
}

.bar-sep {
    width: 2px;
    height: 64px;
    flex: none;
    background: #d8d8d8;
}

.toggle {
    display: flex;
    align-items: center;
    justify-content: center;
    background: #cbcbcb;
    border: 3px solid #aaa;
}

.cb-view { width: 62px; height: 62px; margin-left: 10px; }
.cb-s1 { margin-left: 13px; }
.cb-arrow { margin-left: 28px; }
.cb-s2 { margin-left: 24px; }
.cb-title { margin-left: 14px; width: 334px; font-size: 21px; white-space: nowrap; }
.cb-export { margin-left: 22px; }
.cb-s4 { margin-left: 21px; }
.cb-diamond { margin-left: 24px; }

.toggle-pair {
    margin-left: 24px;
    display: flex;
    border: 3px solid #aaa;
    background: #cbcbcb;
    height: 65px;
}

.pair-cell {
    width: 61px;
    display: flex;
    align-items: center;
    justify-content: center;
}

.pair-cell + .pair-cell { border-left: 2px solid #aaa; }

.cb-textbox { margin-left: 11px; }
.cb-move { margin-left: 22px; }
.cb-s5 { margin-left: 21px; }

.move-a {
    font-family: "DejaVu Serif", serif;
    font-size: 46px;
    font-weight: bold;
    fill: #333;
    text-anchor: middle;
}

.stats {
    height: 60px;
    display: flex;
    justify-content: space-between;
    align-items: flex-start;
    padding-top: 1px;
}

.stats-sel { width: 145px; padding-left: 14px; }
.stats-hid { width: 139px; padding-left: 9px; }

.stat-sep { height: 40px; margin-left: 9px; }
.stats svg { margin-top: 1px; }

.stat-nums {
    display: flex;
    flex-direction: column;
    color: #888;
    font-size: 21px;
    line-height: 28px;
}

.cb-s6 { margin-left: 12px; }
.cb-target { width: 64px; height: 66px; margin-left: 13px; }

/* cytoHubba panel */
.right-panel {
    flex: 1;
    border-left: 10px solid #d3d3d3;
    min-width: 0;
}

.hubba-body {
    display: flex;
    flex-direction: column;
    align-items: center;
    padding-top: 6px;
}

.titled-box {
    width: 325px;
    height: 74px;
    margin: 0 0 6px;
    padding: 0;
    border: 3px solid #a8a8a8;
    box-shadow: 0 2px 0 #fff;
    font-size: 25px;
    text-align: center;
}

.titled-box legend {
    margin-left: 11px;
    padding: 0 4px;
    line-height: 30px;
    text-align: left;
    position: relative;
    top: 5px;
}

.box-value {
    padding-top: 6px;
    line-height: 38px;
    white-space: nowrap;
}

.rank-box {
    width: 332px;
    height: 373px;
    margin-top: 2px;
    padding: 5px 15px 0 15px;
    border: 3px solid #a8a8a8;
    box-shadow: 0 2px 0 #fff;
}

.rank-table {
    width: 298px;
    border-collapse: separate;
    border-spacing: 0;
    table-layout: fixed;
    background: #fff;
    font-size: 20px;
}

.rank-table th {
    height: 36px;
    padding: 0 0 0 10px;
    background: #eeeeee;
    font-weight: normal;
    text-align: left;
    border-top: 3px solid #d3d3d3;
    border-bottom: 3px solid #d3d3d3;
    border-right: 3px solid #d3d3d3;
}

.rank-table td {
    height: 32px;
    padding: 0 0 0 3px;
    line-height: 28px;
    border-bottom: 3px solid #000;
    border-right: 3px solid #000;
    white-space: nowrap;
    overflow: hidden;
}

.r1 { background: #ff1414; }
.r2 { background: #ff2a14; }
.r3 { background: #ff3f14; }
.r4 { background: #ff5514; }
.r5 { background: #ff6a14; }
.r6 { background: #ff8014; }
.r7 { background: #ff9514; }
.r8 { background: #ffaa14; }
.r9 { background: #ffc014; }
.r10 { background: #ffdf10; }

.save-rank {
    margin-top: 21px;
    width: 288px;
    height: 40px;
    background: #fff;
    border: 0;
    border-radius: 10px;
    box-shadow: 0 1px 2px #bbb;
    font-family: inherit;
    font-size: 24px;
}

/* node table */
.table-panel {
    flex: 1;
    border-top: 10px solid #d3d3d3;
    min-height: 0;
    overflow: hidden;
}

.table-tools {
    height: 74px;
    display: flex;
    align-items: center;
    border-bottom: 4px solid #d3d3d3;
    padding-left: 21px;
}

.tt-split { margin-left: 35px; }
.tt-col { margin-left: 42px; }
.tt-col2 { margin-left: 39px; }
.tt-fx { margin-left: 60px; }
.tt-search { margin-left: 26px; }
.tt-import { margin-left: 76px; }
.tt-export { margin-left: 31px; }

.fx {
    font-family: "Liberation Serif", serif;
    font-style: italic;
    font-size: 38px;
    fill: #cccccc;
}

.table-head {
    height: 26px;
    display: flex;
    align-items: flex-end;
    background: linear-gradient(to right, transparent 702px, #fff 702px);
    overflow: hidden;
    padding-left: 20px;
    font-size: 21px;
}

.th-cell {
    height: 26px;
    display: flex;
    align-items: flex-start;
    padding-top: 9px;
    border-right: 2px solid #d8d8d8;
    white-space: nowrap;
}

.th-shared { width: 299px; margin-left: 6px; padding-left: 10px; gap: 14px; border-left: 2px solid #d8d8d8; }
.th-name { width: 181px; padding-left: 8px; gap: 33px; }
.th-label { width: 180px; padding-left: 10px; gap: 33px; }
.th-shared .th-text { margin-left: 18px; }

.th-text { line-height: 26px; margin-top: -3px; }

/* right strip */
.side-strip-right {
    width: 60px;
    flex: none;
    border-left: 4px solid #d3d3d3;
}

.right-tab {
    height: 216px;
    background: #cccccc;
    display: flex;
    flex-direction: column;
    align-items: center;
    gap: 8px;
    padding: 17px 5px 0 0;
}

.right-tab-label {
    writing-mode: vertical-rl;
    font-size: 25px;
    line-height: 30px;
    white-space: nowrap;
}

/* tabs above the status bar */
.bottom-tabs {
    height: 60px;
    flex: none;
    display: flex;
    border-top: 2px solid #d3d3d3;
    border-bottom: 2px solid #d3d3d3;
    font-size: 25px;
    color: #444;
}

.cmd-tab {
    display: flex;
    align-items: center;
    gap: 11px;
    padding-left: 78px;
}

.table-tabs {
    display: flex;
    margin-left: auto;
    margin-right: 57px;
}

.btab {
    display: flex;
    align-items: center;
    gap: 13px;
    padding: 0 22px 0 23px;
    white-space: nowrap;
}

.btab.active {
    background: #cbcbcb;
    color: #000;
}

/* status bar */
.status-bar {
    flex: 1;
    display: flex;
    padding: 10px 20px 0;
    gap: 28px;
}

.status-btn {
    width: 80px;
    height: 47px;
    padding: 0;
    display: flex;
    align-items: center;
    justify-content: center;
    background: #f8f8f8;
    border: 3px solid #b5b5b5;
}

.mem-btn {
    width: 56px;
    margin-left: auto;
}
```
